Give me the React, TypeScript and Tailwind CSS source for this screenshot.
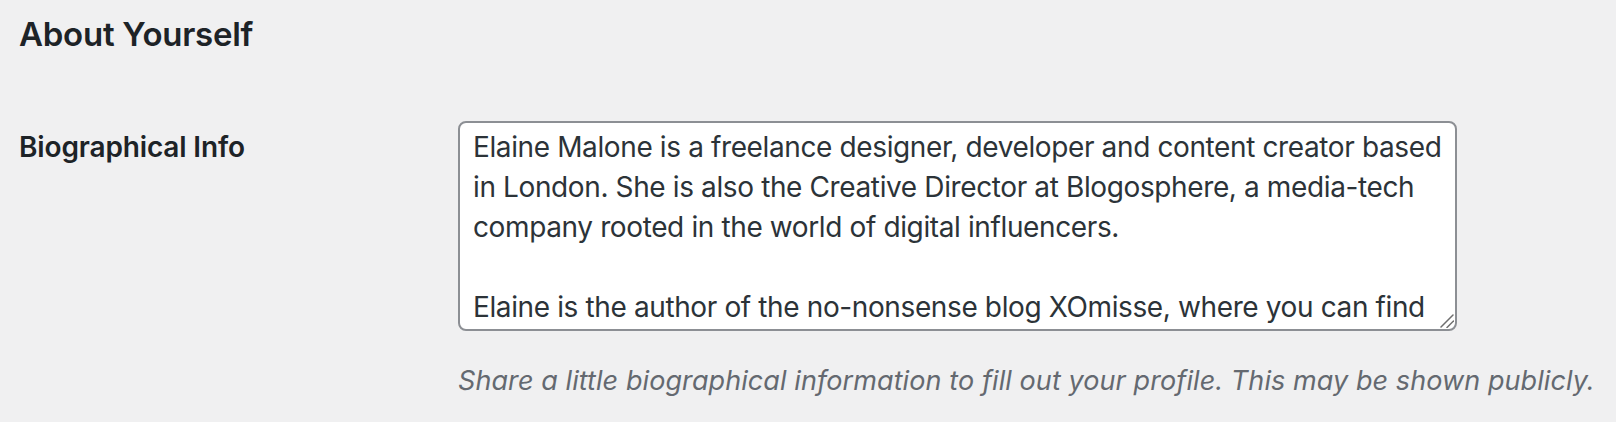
import React from "react";

const bio =
  "Elaine Malone is a freelance designer, developer and content creator based\n" +
  "in London. She is also the Creative Director at Blogosphere, a media-tech\n" +
  "company rooted in the world of digital influencers.\n" +
  "\n" +
  "Elaine is the author of the no-nonsense blog XOmisse, where you can find\n" +
  "practical advice on blogging, design and building a business online.";

export default function App() {
  return (
    <div className="min-h-screen bg-[#f0f0f1] pl-[19px] font-['Inter','Liberation_Sans',sans-serif]">
      <h2 className="pt-[14px] text-[33px] leading-[40px] font-semibold tracking-[-0.25px] text-[#1d2327]">
        About Yourself
      </h2>

      <div className="mt-[67px] flex">
        <div className="w-[439px] pt-[6px]">
          <label
            htmlFor="description"
            className="text-[28px] leading-[40px] font-semibold tracking-[-0.15px] text-[#1d2327]"
          >
            Biographical Info
          </label>
        </div>
        <div>
          <div className="relative w-[999px]">
            <textarea
              id="description"
              wrap="off"
              readOnly
              value={bio}
              className="block h-[210px] w-[999px] resize-none overflow-hidden rounded-[8px] border-2 border-[#8c8f94] bg-white px-[13px] pt-[4px] text-[28px] leading-[40px] tracking-[-0.38px] text-[#2c3338] outline-none"
            />
            {/* resize grip */}
            <svg
              className="pointer-events-none absolute right-[3px] bottom-[3px]"
              width="14"
              height="14"
              viewBox="0 0 14 14"
              fill="none"
              stroke="#6e6e6e"
              strokeWidth="1.5"
              strokeLinecap="round"
            >
              <line x1="1" y1="13" x2="13" y2="1" />
              <line x1="7" y1="13.5" x2="13.5" y2="7" />
            </svg>
          </div>
          <p className="mt-[32px] text-[27px] leading-[36px] italic tracking-[0.08px] text-[#646970]">
            Share a little biographical information to fill out your profile. This may be shown publicly.
          </p>
        </div>
      </div>
    </div>
  );
}
